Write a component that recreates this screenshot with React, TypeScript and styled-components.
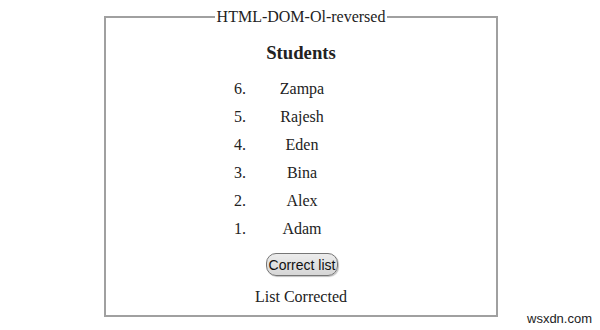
import styled, { createGlobalStyle } from 'styled-components'

const GlobalStyle = createGlobalStyle`
    html, body {
        margin: 0;
        padding: 0;
        background: #ffffff;
    }
    body {
        width: 600px;
        height: 330px;
        overflow: hidden;
        font-family: "Liberation Serif", "Times New Roman", serif;
        color: #222222;
    }
`

const Page = styled.div`
    position: relative;
    width: 600px;
    height: 330px;
    padding-top: 8px;
    box-sizing: border-box;
`

const Frame = styled.fieldset`
    box-sizing: border-box;
    width: 394px;
    height: 309px;
    margin: 0 0 0 104px;
    padding: 0;
    border: 2px solid #a0a0a0;
    display: flex;
    flex-direction: column;
    align-items: center;
`

const Legend = styled.legend`
    margin: 0 auto;
    padding: 0 2px;
    font-size: 16px;
    line-height: 18px;
`

const Heading = styled.h3`
    margin: 16px 0 11px;
    font-size: 18.72px;
    line-height: 22px;
    font-weight: bold;
`

const List = styled.ol`
    margin: 0;
    padding: 0;
    list-style: none;
    width: 100%;
`

const Row = styled.li`
    display: grid;
    grid-template-columns: 140px 1fr 138px;
    height: 28px;
    align-items: center;
    font-size: 16px;
`

const Num = styled.span`
    text-align: right;
`

const Name = styled.span`
    text-align: center;
`

const Button = styled.button`
    margin: 10px 0 0 2px;
    height: 23px;
    padding: 0 2px;
    font-family: "Liberation Sans", Arial, sans-serif;
    font-size: 14px;
    color: #111111;
    background: linear-gradient(#ececec, #d6d6d6);
    border: 1px solid #767676;
    border-radius: 10px;
    box-shadow: 1px 1px 1px rgba(0, 0, 0, 0.25);
`

const Status = styled.p`
    margin: 12px 0 0;
    font-size: 16px;
    line-height: 18px;
`

const Watermark = styled.span`
    position: absolute;
    left: 527px;
    top: 311px;
    font-family: "Liberation Sans", Arial, sans-serif;
    font-size: 13px;
    color: #222222;
`

const students = ['Zampa', 'Rajesh', 'Eden', 'Bina', 'Alex', 'Adam']

export default function App() {
    return (
        <Page>
            <GlobalStyle />
            <Frame>
                <Legend>HTML-DOM-Ol-reversed</Legend>
                <Heading>Students</Heading>
                <List reversed>
                    {students.map((s, i) => (
                        <Row key={s}>
                            <Num>{students.length - i}.</Num>
                            <Name>{s}</Name>
                        </Row>
                    ))}
                </List>
                <Button>Correct list</Button>
                <Status>List Corrected</Status>
            </Frame>
            <Watermark>wsxdn.com</Watermark>
        </Page>
    )
}
